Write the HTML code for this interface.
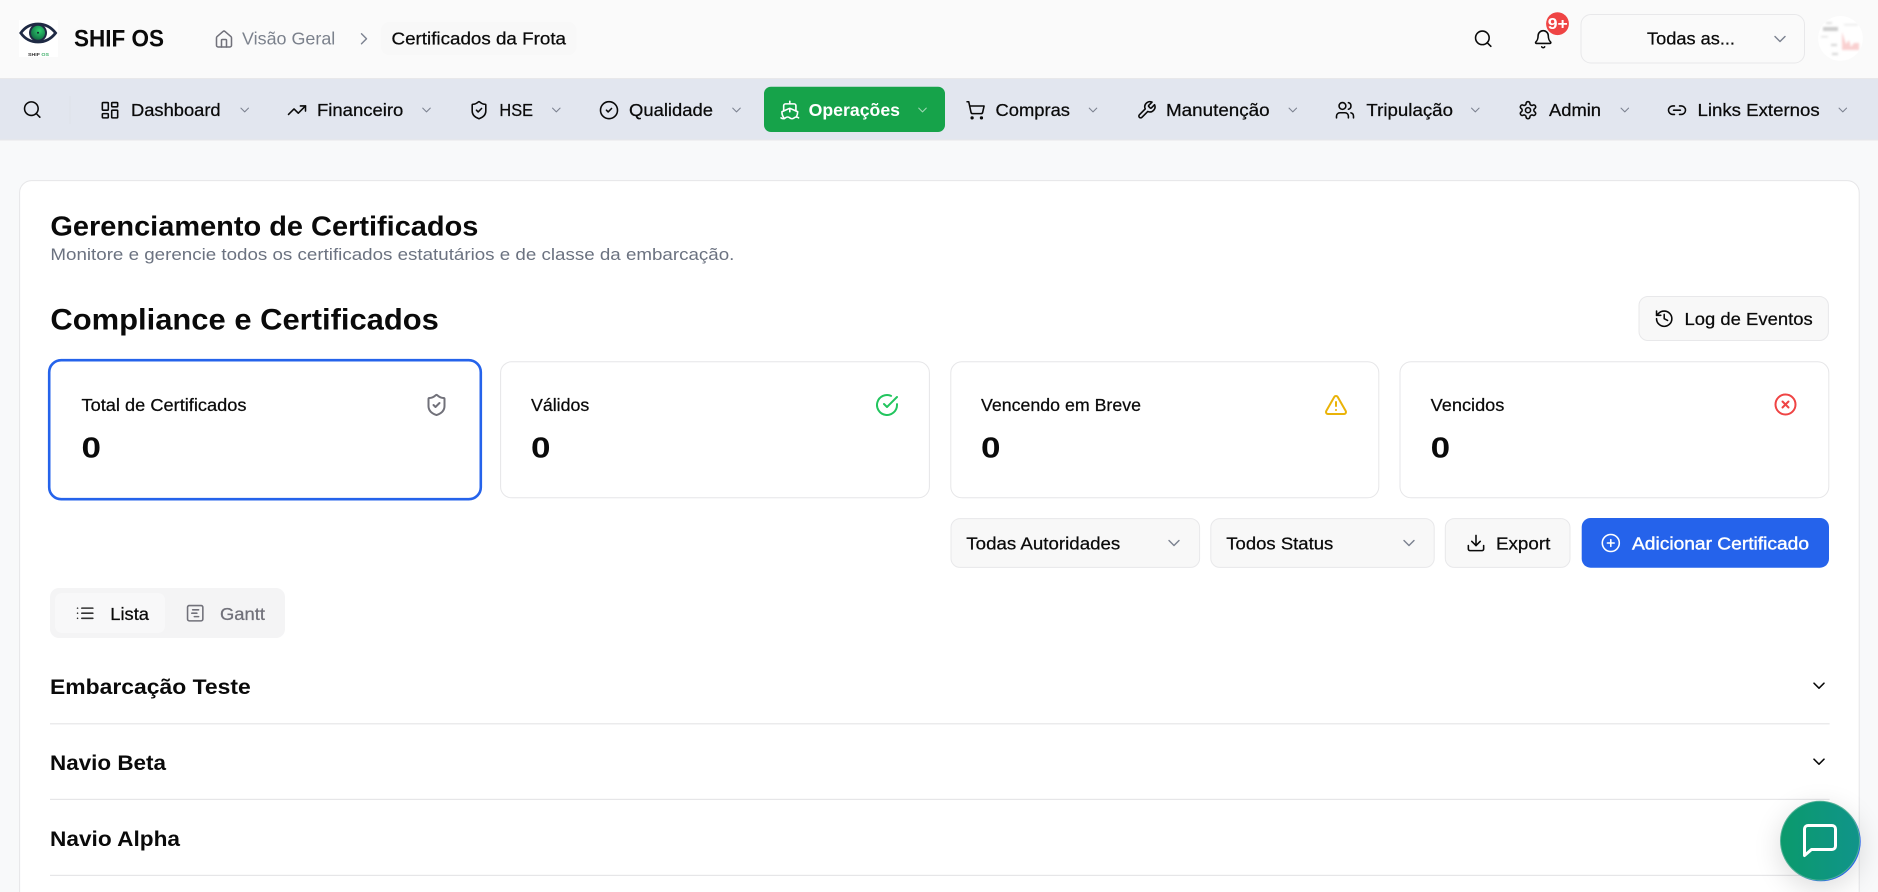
<!DOCTYPE html>
<html lang="pt-BR"><head><meta charset="utf-8"><title>Certificados da Frota</title>
<style>
html,body{margin:0;padding:0;background:#f8f9fa;width:1878px;height:892px;overflow:hidden}
svg{display:block}
text{font-family:"Liberation Sans",sans-serif;fill:#0a0a0a}
.n{font-size:17.4px;stroke:#0a0a0a;stroke-width:.25px}
.b{font-weight:700}
.i{fill:none;stroke:#0a0a0a;stroke-width:1.85;stroke-linecap:round;stroke-linejoin:round}
.s{stroke-width:2}
.g{stroke:#71717a}
.c{fill:none;stroke:#7c8290;stroke-width:1.7;stroke-linecap:round;stroke-linejoin:round}
.box{fill:#f8f8f8;stroke:#e8e8ea;stroke-width:1}
.card{fill:#fff;stroke:#e6e6e8;stroke-width:1}
</style></head><body>
<svg width="1878" height="892" viewBox="0 0 1878 892" xmlns="http://www.w3.org/2000/svg">
<defs>
<linearGradient id="chat" x1="0" x2="1" y1="0" y2="0"><stop offset="0" stop-color="#0b9a6c"/><stop offset="1" stop-color="#10948a"/></linearGradient>
<radialGradient id="iris" cx=".6" cy=".35" r=".8"><stop offset="0" stop-color="#2fd06f"/><stop offset="1" stop-color="#0c5a3b"/></radialGradient>
<filter id="bl" x="-30%" y="-30%" width="160%" height="160%"><feGaussianBlur stdDeviation="1.1"/></filter>
<filter id="sh" x="-50%" y="-50%" width="200%" height="200%"><feGaussianBlur stdDeviation="14"/></filter>
<clipPath id="av"><circle cx="1840.5" cy="38.4" r="22.4"/></clipPath>
</defs>

<rect width="1878" height="892" fill="#f8f9fa"/>

<!-- top bar -->
<rect width="1878" height="79" fill="#fafafa"/>
<rect y="78" width="1878" height="1.2" fill="#e8e8ea"/>

<!-- logo -->
<rect x="19" y="20" width="39" height="37" fill="#fff"/>
<path d="M20.8 33C25 27 31 24 38 24S51 27 55.600 33C51 39 45 42 38 42S25 39 20.800 33Z" fill="none" stroke="#1f2a44" stroke-width="2.800"/>
<circle cx="38" cy="32.800" r="9" fill="#1f2a44"/>
<circle cx="38" cy="32.800" r="7" fill="url(#iris)"/>
<circle cx="38" cy="32.800" r="1" fill="#14202e"/>
<text x="28" y="55.800" font-size="4.500" class="b" textLength="21" lengthAdjust="spacingAndGlyphs" style="fill:#333">SHIF <tspan style="fill:#3fae6a">OS</tspan></text>

<text x="74" y="46.500" class="b" font-size="24" textLength="90" lengthAdjust="spacingAndGlyphs">SHIF OS</text>

<!-- breadcrumb -->
<svg x="214" y="29.500" width="20" height="20" viewBox="0 0 24 24" class="i g"><path d="M15 21v-8a1 1 0 0 0-1-1h-4a1 1 0 0 0-1 1v8"/><path d="M3 10a2 2 0 0 1 .709-1.528l7-5.999a2 2 0 0 1 2.582 0l7 5.999A2 2 0 0 1 21 10v9a2 2 0 0 1-2 2H5a2 2 0 0 1-2-2z"/></svg>
<text x="242" y="44.500" font-size="17.500" textLength="93.300" lengthAdjust="spacingAndGlyphs" style="fill:#7b818c">Visão Geral</text>
<svg x="354" y="28.700" width="20" height="20" viewBox="0 0 24 24" class="c"><path d="m9 18 6-6-6-6"/></svg>
<rect x="381" y="22" width="195.500" height="33" rx="8" fill="#f8f8f8"/>
<text x="391.500" y="44.500" font-size="17.500" textLength="174.500" lengthAdjust="spacingAndGlyphs" class="n">Certificados da Frota</text>

<!-- top right -->
<svg x="1473" y="28.500" width="20.400" height="20.400" viewBox="0 0 24 24" class="i"><circle cx="11" cy="11" r="8"/><path d="m21 21-4.300-4.300"/></svg>
<svg x="1533" y="29" width="20.400" height="20.400" viewBox="0 0 24 24" class="i"><path d="M10.268 21a2 2 0 0 0 3.464 0"/><path d="M3.262 15.326A1 1 0 0 0 4 17h16a1 1 0 0 0 .74-1.673C19.41 13.956 18 12.499 18 8A6 6 0 0 0 6 8c0 4.499-1.411 5.956-2.738 7.326"/></svg>
<circle cx="1557.500" cy="23.700" r="11.400" fill="#ef4444"/>
<text x="1547.800" y="29.200" class="b" font-size="15.500" textLength="20" lengthAdjust="spacingAndGlyphs" style="fill:#fff">9+</text>
<rect x="1581" y="14.500" width="223.500" height="48.500" rx="10" fill="#fafafa" stroke="#e8e8ea" stroke-width="1"/>
<text x="1647" y="44.500" font-size="17.500" textLength="88" lengthAdjust="spacingAndGlyphs" class="n">Todas as...</text>
<svg x="1770" y="29" width="20" height="20" viewBox="0 0 24 24" class="c"><path d="m6 9 6 6 6-6"/></svg>

<!-- avatar -->
<circle cx="1840.500" cy="38.400" r="22.400" fill="#fff"/>
<g clip-path="url(#av)" filter="url(#bl)" opacity=".85">
<rect x="1823" y="27" width="15" height="4" fill="#aaa" opacity=".7"/>
<rect x="1826" y="22" width="6" height="2" fill="#ccc" opacity=".7"/>
<rect x="1821" y="36" width="7" height="1.500" fill="#ddd"/>
<rect x="1831" y="44" width="6" height="2" fill="#ccc"/>
<rect x="1832" y="53" width="6" height="2" fill="#ccc"/>
<path d="M1842 32L1846 44L1849 40L1851 47L1854 43L1859 43V50H1842Z" fill="#f8c8c8"/>
<rect x="1844" y="24" width="14" height="1.500" fill="#e4e4e4"/>
</g>

<!-- nav -->
<rect y="79" width="1878" height="61" fill="#e2e6ef"/>
<rect y="139.500" width="1878" height="1" fill="#e8e8ea"/>
<rect x="69.500" y="96" width="1" height="28" fill="#dde1ea"/>
<svg x="22" y="99.300" width="20.400" height="20.400" viewBox="0 0 24 24" class="i"><circle cx="11" cy="11" r="8"/><path d="m21 21-4.300-4.300"/></svg>

<svg x="99.800" y="100" width="20.400" height="20.400" viewBox="0 0 24 24" class="i"><rect width="7" height="9" x="3" y="3" rx="1"/><rect width="7" height="5" x="14" y="3" rx="1"/><rect width="7" height="9" x="14" y="12" rx="1"/><rect width="7" height="5" x="3" y="16" rx="1"/></svg>
<text x="131" y="116" class="n" textLength="89.600" lengthAdjust="spacingAndGlyphs">Dashboard</text>
<svg x="237.200" y="102.500" width="15" height="15" viewBox="0 0 24 24" class="c"><path d="m6 9 6 6 6-6"/></svg>

<svg x="286.800" y="100" width="20.400" height="20.400" viewBox="0 0 24 24" class="i"><polyline points="22 7 13.500 15.500 8.500 10.500 2 17"/><polyline points="16 7 22 7 22 13"/></svg>
<text x="317" y="116" class="n" textLength="86.300" lengthAdjust="spacingAndGlyphs">Financeiro</text>
<svg x="419" y="102.500" width="15" height="15" viewBox="0 0 24 24" class="c"><path d="m6 9 6 6 6-6"/></svg>

<svg x="468.800" y="100" width="20.400" height="20.400" viewBox="0 0 24 24" class="i"><path d="M20 13c0 5-3.500 7.500-7.660 8.950a1 1 0 0 1-.67-.01C7.500 20.500 4 18 4 13V6a1 1 0 0 1 1-1c2 0 4.500-1.200 6.240-2.720a1.170 1.170 0 0 1 1.520 0C14.510 3.810 17 5 19 5a1 1 0 0 1 1 1z"/><path d="m9 12 2 2 4-4"/></svg>
<text x="499.400" y="116" class="n" textLength="33.600" lengthAdjust="spacingAndGlyphs">HSE</text>
<svg x="548.800" y="102.500" width="15" height="15" viewBox="0 0 24 24" class="c"><path d="m6 9 6 6 6-6"/></svg>

<svg x="598.800" y="100" width="20.400" height="20.400" viewBox="0 0 24 24" class="i"><circle cx="12" cy="12" r="10"/><path d="m9 12 2 2 4-4"/></svg>
<text x="629" y="116" class="n" textLength="84" lengthAdjust="spacingAndGlyphs">Qualidade</text>
<svg x="729" y="102.500" width="15" height="15" viewBox="0 0 24 24" class="c"><path d="m6 9 6 6 6-6"/></svg>

<rect x="764" y="86.700" width="181" height="45.300" rx="7" fill="#16a34a"/>
<svg x="779.300" y="99.500" width="21" height="21" viewBox="0 0 24 24" class="i" style="stroke:#fff"><path d="M12 10.189V14"/><path d="M12 2v3"/><path d="M19 13V7a2 2 0 0 0-2-2H7a2 2 0 0 0-2 2v6"/><path d="M19.380 20A11.600 11.600 0 0 0 21 14l-8.188-3.639a2 2 0 0 0-1.624 0L3 14a11.600 11.600 0 0 0 2.810 7.760"/><path d="M2 21c.6.5 1.200 1 2.500 1 2.500 0 2.500-2 5-2 1.300 0 1.900.5 2.500 1s1.200 1 2.500 1c2.500 0 2.500-2 5-2 1.300 0 1.900.5 2.500 1"/></svg>
<text x="808.600" y="116" class="b" font-size="17.400" textLength="91.400" lengthAdjust="spacingAndGlyphs" style="fill:#fff">Operações</text>
<svg x="915" y="102.500" width="15" height="15" viewBox="0 0 24 24" class="c" style="stroke:#9fd8b4"><path d="m6 9 6 6 6-6"/></svg>

<svg x="965.300" y="100" width="20.400" height="20.400" viewBox="0 0 24 24" class="i"><circle cx="8" cy="21" r="1"/><circle cx="19" cy="21" r="1"/><path d="M2.050 2.050h2l2.660 12.420a2 2 0 0 0 2 1.580h9.780a2 2 0 0 0 1.950-1.570l1.650-7.430H5.120"/></svg>
<text x="995.500" y="116" class="n" textLength="74.500" lengthAdjust="spacingAndGlyphs">Compras</text>
<svg x="1085.500" y="102.500" width="15" height="15" viewBox="0 0 24 24" class="c"><path d="m6 9 6 6 6-6"/></svg>

<svg x="1136.300" y="100" width="20.400" height="20.400" viewBox="0 0 24 24" class="i"><path d="M14.700 6.300a1 1 0 0 0 0 1.400l1.600 1.600a1 1 0 0 0 1.400 0l3.770-3.770a6 6 0 0 1-7.940 7.940l-6.910 6.910a2.120 2.120 0 0 1-3-3l6.910-6.910a6 6 0 0 1 7.940-7.940l-3.760 3.760z"/></svg>
<text x="1166" y="116" class="n" textLength="103.600" lengthAdjust="spacingAndGlyphs">Manutenção</text>
<svg x="1285.300" y="102.500" width="15" height="15" viewBox="0 0 24 24" class="c"><path d="m6 9 6 6 6-6"/></svg>

<svg x="1334.800" y="100" width="20.400" height="20.400" viewBox="0 0 24 24" class="i"><path d="M16 21v-2a4 4 0 0 0-4-4H6a4 4 0 0 0-4 4v2"/><circle cx="9" cy="7" r="4"/><path d="M22 21v-2a4 4 0 0 0-3-3.870"/><path d="M16 3.130a4 4 0 0 1 0 7.750"/></svg>
<text x="1366.400" y="116" class="n" textLength="86.600" lengthAdjust="spacingAndGlyphs">Tripulação</text>
<svg x="1467.800" y="102.500" width="15" height="15" viewBox="0 0 24 24" class="c"><path d="m6 9 6 6 6-6"/></svg>

<svg x="1517.800" y="100" width="20.400" height="20.400" viewBox="0 0 24 24" class="i"><path d="M12.220 2h-.44a2 2 0 0 0-2 2v.18a2 2 0 0 1-1 1.730l-.43.25a2 2 0 0 1-2 0l-.15-.08a2 2 0 0 0-2.730.73l-.22.38a2 2 0 0 0 .73 2.730l.15.1a2 2 0 0 1 1 1.720v.51a2 2 0 0 1-1 1.740l-.15.09a2 2 0 0 0-.73 2.730l.22.38a2 2 0 0 0 2.730.73l.15-.08a2 2 0 0 1 2 0l.43.25a2 2 0 0 1 1 1.730V20a2 2 0 0 0 2 2h.44a2 2 0 0 0 2-2v-.18a2 2 0 0 1 1-1.730l.43-.25a2 2 0 0 1 2 0l.15.08a2 2 0 0 0 2.730-.73l.22-.39a2 2 0 0 0-.73-2.730l-.15-.08a2 2 0 0 1-1-1.740v-.5a2 2 0 0 1 1-1.740l.15-.09a2 2 0 0 0 .73-2.730l-.22-.38a2 2 0 0 0-2.730-.73l-.15.08a2 2 0 0 1-2 0l-.43-.25a2 2 0 0 1-1-1.730V4a2 2 0 0 0-2-2z"/><circle cx="12" cy="12" r="3"/></svg>
<text x="1549" y="116" class="n" textLength="52" lengthAdjust="spacingAndGlyphs">Admin</text>
<svg x="1617.300" y="102.500" width="15" height="15" viewBox="0 0 24 24" class="c"><path d="m6 9 6 6 6-6"/></svg>

<svg x="1666.800" y="100" width="20.400" height="20.400" viewBox="0 0 24 24" class="i"><path d="M9 17H7A5 5 0 0 1 7 7h2"/><path d="M15 7h2a5 5 0 1 1 0 10h-2"/><line x1="8" y1="12" x2="16" y2="12"/></svg>
<text x="1697.500" y="116" class="n" textLength="122.200" lengthAdjust="spacingAndGlyphs">Links Externos</text>
<svg x="1835.300" y="102.500" width="15" height="15" viewBox="0 0 24 24" class="c"><path d="m6 9 6 6 6-6"/></svg>

<!-- main card -->
<path d="M19.600 892V192.600a12 12 0 0 1 12-12H1847.200a12 12 0 0 1 12 12V892" class="card"/>

<text x="50.400" y="235.700" class="b" font-size="28" textLength="428" lengthAdjust="spacingAndGlyphs">Gerenciamento de Certificados</text>
<text x="50.400" y="260" font-size="17" textLength="684" lengthAdjust="spacingAndGlyphs" style="fill:#6b7280">Monitore e gerencie todos os certificados estatutários e de classe da embarcação.</text>
<text x="50.400" y="329.300" class="b" font-size="29.500" textLength="388.500" lengthAdjust="spacingAndGlyphs">Compliance e Certificados</text>

<rect x="1639" y="296.500" width="189.400" height="44" rx="9" class="box"/>
<svg x="1654" y="308.500" width="20.400" height="20.400" viewBox="0 0 24 24" class="i"><path d="M3 12a9 9 0 1 0 9-9 9.750 9.750 0 0 0-6.740 2.740L3 8"/><path d="M3 3v5h5"/><path d="M12 7v5l4 2"/></svg>
<text x="1684.500" y="325" class="n" textLength="128.200" lengthAdjust="spacingAndGlyphs">Log de Eventos</text>

<!-- stat cards -->
<rect x="49.200" y="360.200" width="431.600" height="139" rx="12" fill="#fff" stroke="#2563eb" stroke-width="2.600"/>
<rect x="500.600" y="361.800" width="428.800" height="136" rx="11" class="card"/>
<rect x="950.800" y="361.800" width="428" height="136" rx="11" class="card"/>
<rect x="1400" y="361.800" width="428.800" height="136" rx="11" class="card"/>

<text x="81.500" y="411" class="n" font-size="17" textLength="165" lengthAdjust="spacingAndGlyphs">Total de Certificados</text>
<text x="531" y="411" class="n" textLength="58.300" lengthAdjust="spacingAndGlyphs">Válidos</text>
<text x="981" y="411" class="n" textLength="160" lengthAdjust="spacingAndGlyphs">Vencendo em Breve</text>
<text x="1430.600" y="411" class="n" textLength="73.800" lengthAdjust="spacingAndGlyphs">Vencidos</text>

<text x="81.500" y="457.300" class="b" font-size="29" textLength="19.500" lengthAdjust="spacingAndGlyphs">0</text>
<text x="531" y="457.300" class="b" font-size="29" textLength="19.500" lengthAdjust="spacingAndGlyphs">0</text>
<text x="981" y="457.300" class="b" font-size="29" textLength="19.500" lengthAdjust="spacingAndGlyphs">0</text>
<text x="1430.600" y="457.300" class="b" font-size="29" textLength="19.500" lengthAdjust="spacingAndGlyphs">0</text>

<svg x="424.500" y="393" width="24" height="24" viewBox="0 0 24 24" class="i s" style="stroke:#71717a"><path d="M20 13c0 5-3.500 7.500-7.660 8.950a1 1 0 0 1-.67-.01C7.500 20.500 4 18 4 13V6a1 1 0 0 1 1-1c2 0 4.500-1.200 6.240-2.720a1.170 1.170 0 0 1 1.520 0C14.510 3.810 17 5 19 5a1 1 0 0 1 1 1z"/><path d="m9 12 2 2 4-4"/></svg>
<svg x="875" y="393" width="24" height="24" viewBox="0 0 24 24" class="i s" style="stroke:#22c55e"><path d="M22 11.080V12a10 10 0 1 1-5.930-9.140"/><path d="m9 11 3 3L22 4"/></svg>
<svg x="1324" y="393" width="24" height="24" viewBox="0 0 24 24" class="i s" style="stroke:#eab308"><path d="m21.730 18-8-14a2 2 0 0 0-3.480 0l-8 14A2 2 0 0 0 4 21h16a2 2 0 0 0 1.730-3"/><path d="M12 9v4"/><path d="M12 17h.01"/></svg>
<svg x="1773.500" y="392.500" width="24" height="24" viewBox="0 0 24 24" class="i s" style="stroke:#ef4444"><circle cx="12" cy="12" r="10"/><path d="m15 9-6 6"/><path d="m9 9 6 6"/></svg>

<!-- controls -->
<rect x="951" y="518.600" width="248.600" height="48.800" rx="9" class="box"/>
<text x="966.300" y="549.500" class="n" textLength="154" lengthAdjust="spacingAndGlyphs">Todas Autoridades</text>
<svg x="1164" y="533" width="20" height="20" viewBox="0 0 24 24" class="c"><path d="m6 9 6 6 6-6"/></svg>

<rect x="1210.800" y="518.600" width="223.400" height="48.800" rx="9" class="box"/>
<text x="1226.300" y="549.500" class="n" textLength="107" lengthAdjust="spacingAndGlyphs">Todos Status</text>
<svg x="1399" y="533" width="20" height="20" viewBox="0 0 24 24" class="c"><path d="m6 9 6 6 6-6"/></svg>

<rect x="1445.300" y="518.600" width="124.700" height="48.800" rx="9" class="box"/>
<svg x="1465.800" y="532.800" width="20.400" height="20.400" viewBox="0 0 24 24" class="i"><path d="M21 15v4a2 2 0 0 1-2 2H5a2 2 0 0 1-2-2v-4"/><polyline points="7 10 12 15 17 10"/><line x1="12" y1="15" x2="12" y2="3"/></svg>
<text x="1496" y="549.500" class="n" textLength="54.300" lengthAdjust="spacingAndGlyphs">Export</text>

<rect x="1581.700" y="518" width="247.300" height="49.700" rx="9" fill="#2563eb"/>
<svg x="1600.600" y="532.800" width="20.400" height="20.400" viewBox="0 0 24 24" class="i" style="stroke:#fff"><circle cx="12" cy="12" r="10"/><path d="M8 12h8"/><path d="M12 8v8"/></svg>
<text x="1632" y="549.500" font-size="17.400" textLength="177" lengthAdjust="spacingAndGlyphs" style="fill:#fff;stroke:#fff;stroke-width:.4px">Adicionar Certificado</text>

<!-- tabs -->
<rect x="50" y="588" width="235" height="50" rx="9" fill="#f4f4f5"/>
<rect x="55" y="593" width="110" height="40" rx="7" fill="#f8f8f9"/>
<svg x="75" y="603" width="20.400" height="20.400" viewBox="0 0 24 24" class="i" style="stroke:#333"><path d="M3 12h.01"/><path d="M3 18h.01"/><path d="M3 6h.01"/><path d="M8 12h13"/><path d="M8 18h13"/><path d="M8 6h13"/></svg>
<text x="110.300" y="620" class="n" textLength="38.700" lengthAdjust="spacingAndGlyphs">Lista</text>
<svg x="185" y="603" width="20.400" height="20.400" viewBox="0 0 24 24" class="i" style="stroke:#71717a"><rect width="18" height="18" x="3" y="3" rx="2"/><path d="M9 8h7"/><path d="M8 12h6"/><path d="M11 16h5"/></svg>
<text x="220" y="620" font-size="17.400" textLength="45" lengthAdjust="spacingAndGlyphs" style="fill:#71717a;stroke:#71717a;stroke-width:.25px">Gantt</text>

<!-- rows -->
<text x="50" y="694" class="b" font-size="21.600" textLength="200.700" lengthAdjust="spacingAndGlyphs">Embarcação Teste</text>
<rect x="50" y="723.200" width="1779.600" height="1.200" fill="#e6e6e8"/>
<svg x="1809" y="675.700" width="20" height="20" viewBox="0 0 24 24" class="i"><path d="m6 9 6 6 6-6"/></svg>

<text x="50" y="770" class="b" font-size="21.600" textLength="116" lengthAdjust="spacingAndGlyphs">Navio Beta</text>
<rect x="50" y="798.800" width="1779.600" height="1.200" fill="#e6e6e8"/>
<svg x="1809" y="751.700" width="20" height="20" viewBox="0 0 24 24" class="i"><path d="m6 9 6 6 6-6"/></svg>

<text x="50" y="846" class="b" font-size="21.600" textLength="130" lengthAdjust="spacingAndGlyphs">Navio Alpha</text>
<rect x="50" y="874.800" width="1779.600" height="1.200" fill="#e6e6e8"/>

<!-- chat -->
<circle cx="1820" cy="848" r="40" fill="#000" opacity=".14" filter="url(#sh)"/>
<circle cx="1820.900" cy="841.500" r="39.800" fill="#2563eb"/>
<circle cx="1820" cy="840.700" r="39.500" fill="url(#chat)" stroke="#52b196" stroke-width="1"/>
<path d="M1808 825.500H1832a3.500 3.500 0 0 1 3.500 3.500V846a3.500 3.500 0 0 1-3.500 3.500H1811.500L1804.500 855.500V829a3.500 3.500 0 0 1 3.500-3.500Z" fill="none" stroke="#fff" stroke-width="3" stroke-linejoin="round"/>
</svg>
</body></html>
